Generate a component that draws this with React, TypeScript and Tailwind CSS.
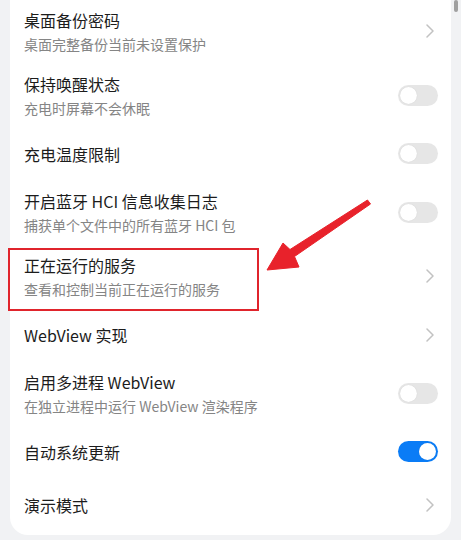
import React from 'react';

type Item = {
  title: string;
  desc?: string;
  kind: 'chevron' | 'toggle';
  on?: boolean;
};

const items: Item[] = [
  { title: '桌面备份密码', desc: '桌面完整备份当前未设置保护', kind: 'chevron' },
  { title: '保持唤醒状态', desc: '充电时屏幕不会休眠', kind: 'toggle' },
  { title: '充电温度限制', kind: 'toggle' },
  { title: '开启蓝牙 HCI 信息收集日志', desc: '捕获单个文件中的所有蓝牙 HCI 包', kind: 'toggle' },
  { title: '正在运行的服务', desc: '查看和控制当前正在运行的服务', kind: 'chevron' },
  { title: 'WebView 实现', kind: 'chevron' },
  { title: '启用多进程 WebView', desc: '在独立进程中运行 WebView 渲染程序', kind: 'toggle' },
  { title: '自动系统更新', kind: 'toggle', on: true },
  { title: '演示模式', kind: 'chevron' },
];

function Toggle({ on }: { on?: boolean }) {
  return (
    <div
      className={
        on
          ? 'w-[40px] h-[21px] rounded-full p-[2px] flex justify-end bg-[#0a7cf6]'
          : 'w-[40px] h-[21px] rounded-full p-[2px] flex justify-start bg-[#e6e6e6]'
      }
    >
      <div className="w-[17px] h-[17px] rounded-full bg-white shadow-[0_0_1px_rgba(0,0,0,0.15)]" />
    </div>
  );
}

function Chevron() {
  return (
    <svg width="8" height="14" viewBox="0 0 8 14" className="mr-[4px]">
      <path d="M1 1 L7 7 L1 13" fill="none" stroke="#c2c2c2" strokeWidth="1.5" strokeLinecap="round" strokeLinejoin="round" />
    </svg>
  );
}

function Row({ item }: { item: Item }) {
  return (
    <div className={item.desc ? 'flex items-center h-[64px] pl-[14px] pr-[13px]' : 'flex items-center h-[53px] pl-[14px] pr-[13px]'}>
      <div className="flex-1 flex flex-col">
        <div className="text-[16px] leading-[22px] text-[#1c1c1c]">{item.title}</div>
        {item.desc && <div className="mt-[3px] text-[14px] leading-[20px] text-[#858585]">{item.desc}</div>}
      </div>
      <div className="w-[40px] flex justify-end">
        {item.kind === 'toggle' ? <Toggle on={item.on} /> : <Chevron />}
      </div>
    </div>
  );
}

export default function App() {
  return (
    <div
      className="relative w-full h-[540px] overflow-hidden bg-[#f1f2f4]"
      style={{ fontFamily: '"Noto Sans CJK SC", "Noto Sans", sans-serif' }}
    >
      <div className="mx-[10px] -mt-[1px] bg-white rounded-b-[18px] pb-[4px]">
        {items.map((item, i) => (
          <Row key={i} item={item} />
        ))}
      </div>

      {/* scroll indicator */}
      <div className="absolute right-[3px] top-0 w-[4px] h-[12px] rounded-full bg-[#a0a0a0]" />

      {/* annotation box */}
      <div className="absolute left-[8px] top-[248px] w-[251px] h-[63px] border-2 border-[#e0242c]" />

      {/* annotation arrow */}
      <svg className="absolute left-0 top-0 pointer-events-none" width="461" height="540" viewBox="0 0 461 540">
        <polygon
          points="267,270 283,243 290,249.5 367.5,200 370.5,204 294.5,256.5 299,267"
          fill="#e8222b"
          strokeLinejoin="round"
          stroke="#e8222b"
          strokeWidth="1"
        />
      </svg>
    </div>
  );
}
